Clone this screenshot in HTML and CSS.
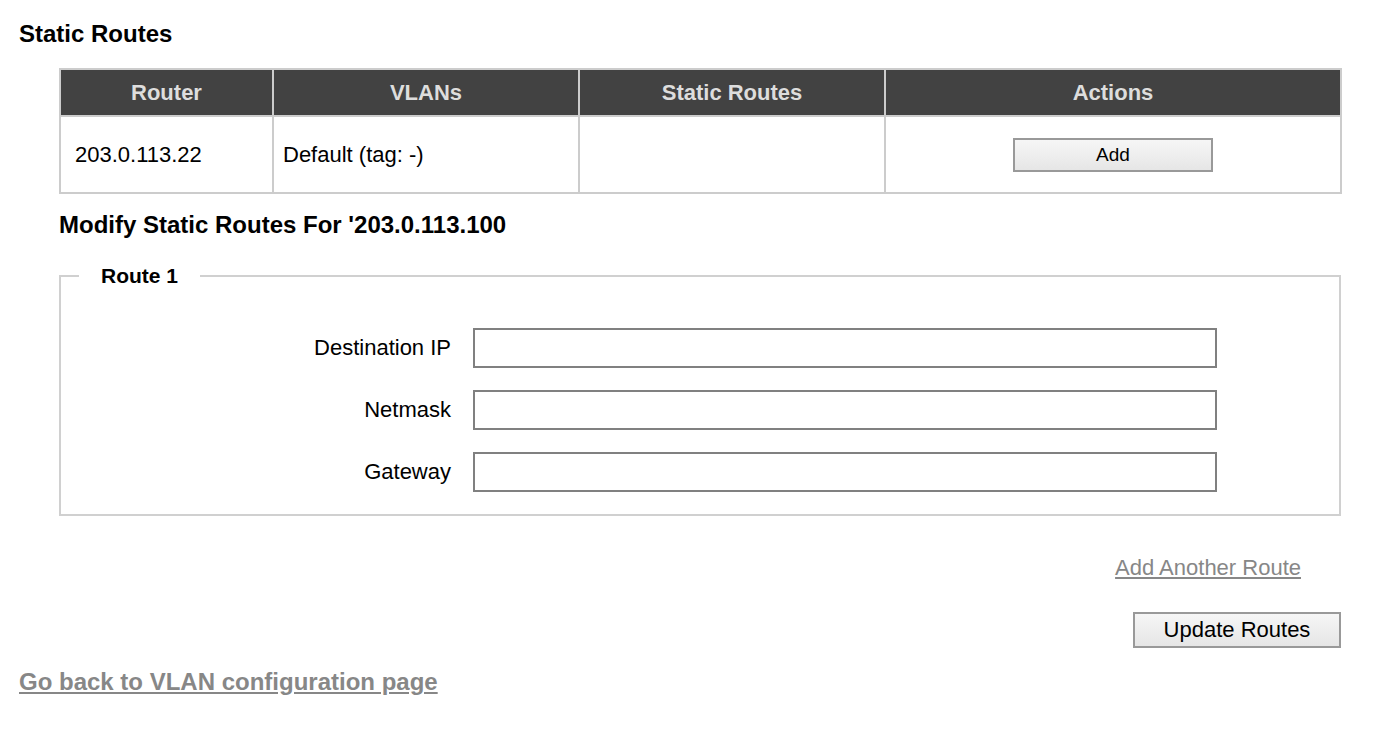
FILE: index.html
```html
<!DOCTYPE html>
<html lang="en">
<head>
<meta charset="utf-8">
<title>Static Routes</title>
<link rel="stylesheet" href="styles.css">
</head>
<body>
<div class="page">
  <h1 class="title">Static Routes</h1>
  <div class="content">
    <table class="routes">
      <colgroup>
        <col class="c-router">
        <col class="c-vlans">
        <col class="c-static">
        <col class="c-actions">
      </colgroup>
      <thead>
        <tr>
          <th>Router</th>
          <th>VLANs</th>
          <th>Static Routes</th>
          <th>Actions</th>
        </tr>
      </thead>
      <tbody>
        <tr>
          <td class="cell-router">203.0.113.22</td>
          <td>Default (tag: -)</td>
          <td></td>
          <td class="cell-actions"><button class="btn btn-add" type="button">Add</button></td>
        </tr>
      </tbody>
    </table>

    <h2 class="subtitle">Modify Static Routes For '203.0.113.100</h2>

    <fieldset class="route">
      <legend class="route-legend">Route 1</legend>
      <div class="route-grid">
        <label class="field-label" for="dest">Destination IP</label>
        <input class="field-input" id="dest" type="text">
        <label class="field-label" for="mask">Netmask</label>
        <input class="field-input" id="mask" type="text">
        <label class="field-label" for="gw">Gateway</label>
        <input class="field-input" id="gw" type="text">
      </div>
    </fieldset>

    <div class="add-row"><a class="link add-link" href="#">Add Another Route</a></div>
    <div class="submit-row"><button class="btn btn-update" type="button">Update Routes</button></div>
  </div>
  <a class="link back-link" href="#">Go back to VLAN configuration page</a>
</div>
</body>
</html>
```

FILE: styles.css
```css
* { box-sizing: border-box; }

html, body {
  margin: 0;
  padding: 0;
  background: #ffffff;
  color: #000000;
  font-family: "Liberation Sans", Arial, Helvetica, sans-serif;
}

.page {
  padding: 20px 0 40px 19px;
}

.title {
  margin: 0;
  font-size: 24px;
  line-height: 28px;
  font-weight: bold;
}

.content {
  margin-left: 40px;
  width: 1282px;
}

.routes {
  margin-top: 20px;
  width: 1281px;
  border-collapse: collapse;
  table-layout: fixed;
  font-size: 22px;
}

.c-router { width: 213px; }
.c-vlans { width: 306px; }
.c-static { width: 306px; }
.c-actions { width: 456px; }

.routes th,
.routes td {
  border: 2px solid #cccccc;
}

.routes th {
  height: 47px;
  padding: 0 8px;
  background: #424242;
  color: #dddddd;
  font-weight: bold;
  text-align: center;
  vertical-align: middle;
}

.routes td {
  height: 77px;
  padding: 0 9px;
  text-align: left;
  vertical-align: middle;
}

.routes td.cell-router { padding-left: 14px; }
.routes td.cell-actions { text-align: center; padding: 0; }

.btn {
  font-family: "Liberation Sans", Arial, Helvetica, sans-serif;
  color: #000000;
  background: linear-gradient(#f6f6f6, #e6e6e6);
  border: 2px solid #999999;
  border-radius: 0;
  padding: 0;
  margin: 0;
}

.btn-add {
  width: 200px;
  height: 34px;
  font-size: 19px;
  vertical-align: middle;
}

.btn-update {
  width: 208px;
  height: 36px;
  font-size: 22px;
}

.subtitle {
  margin: 17px 0 0 0;
  font-size: 24px;
  line-height: 28px;
  font-weight: bold;
}

.route {
  margin: 24px 0 0 0;
  padding: 39px 0 22px 0;
  border: 2px solid #d0d0d0;
  min-width: 0;
}

.route-legend {
  margin-left: 18px;
  padding: 0 22px;
  font-size: 21px;
  line-height: 26px;
  font-weight: bold;
}

.route-grid {
  display: grid;
  grid-template-columns: 391px 744px;
  column-gap: 21px;
  row-gap: 22px;
  align-items: center;
}

.field-label {
  font-size: 22px;
  line-height: 26px;
  text-align: right;
  padding-right: 1px;
}

.field-input {
  width: 744px;
  height: 40px;
  margin: 0;
  border: 2px solid #808080;
  border-radius: 0;
  background: #ffffff;
  font-size: 20px;
  padding: 0 6px;
  font-family: "Liberation Sans", Arial, sans-serif;
}

.add-row {
  margin-top: 39px;
  padding-right: 40px;
  text-align: right;
  font-size: 22px;
  line-height: 26px;
}

.link {
  color: #878787;
  text-decoration: underline;
}

.submit-row {
  margin-top: 31px;
  display: flex;
  justify-content: flex-end;
}

.back-link {
  display: inline-block;
  margin-top: 20px;
  font-size: 24px;
  line-height: 28px;
  font-weight: bold;
}
```
